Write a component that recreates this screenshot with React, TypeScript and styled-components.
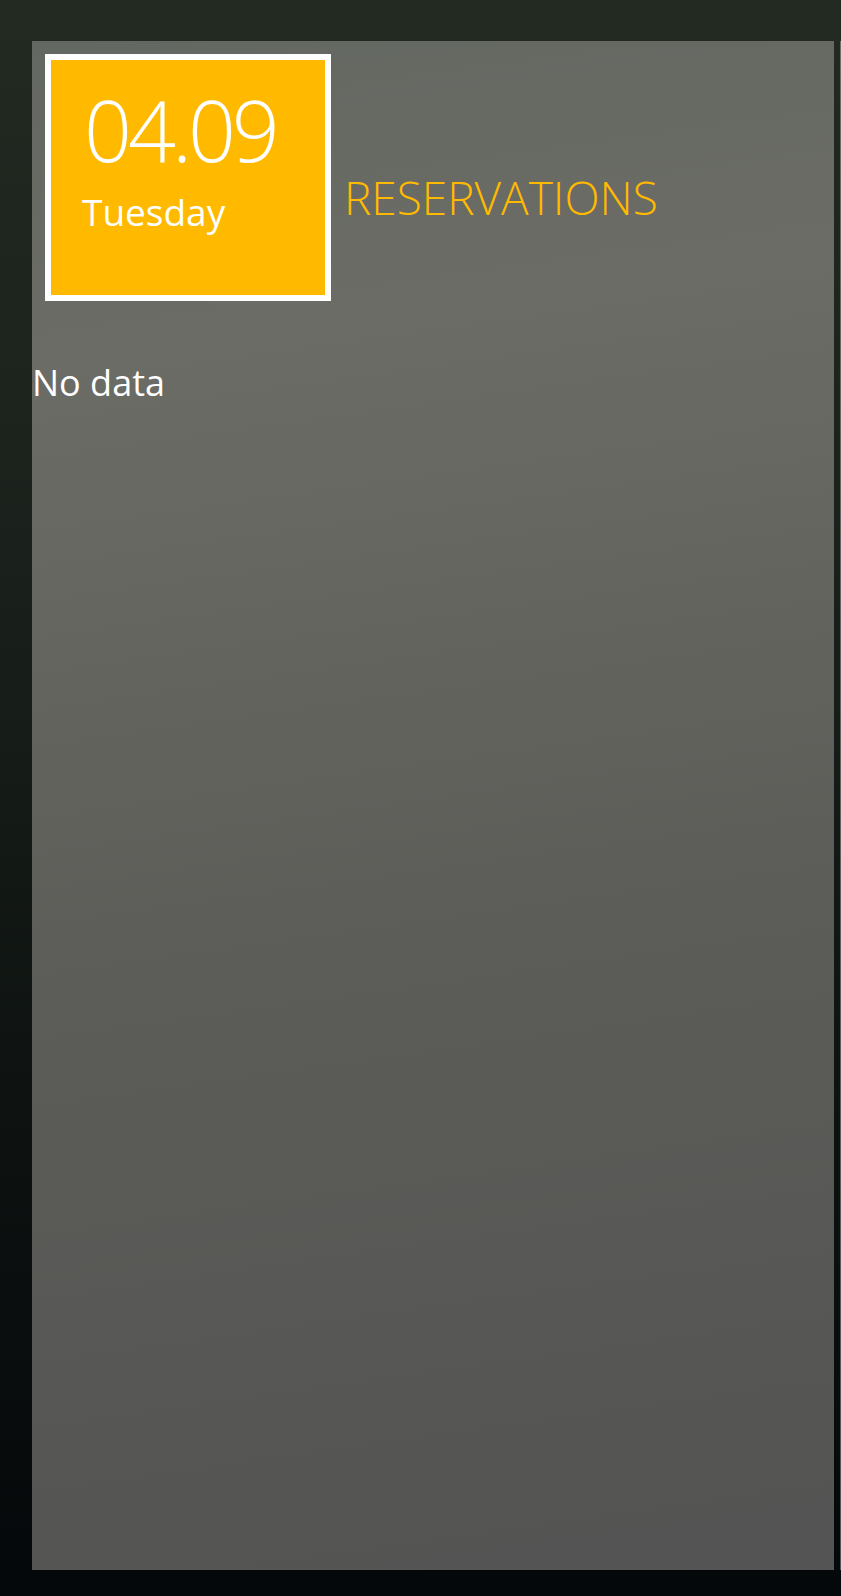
import styled, { createGlobalStyle } from 'styled-components';

const Global = createGlobalStyle`
  html, body {
    margin: 0;
    padding: 0;
    height: 1596px;
    overflow: hidden;
  }
  body {
    background: linear-gradient(180deg, #232a22 0%, #1a201b 35%, #0f1412 65%, #05080a 100%);
    font-family: 'Open Sans', 'Noto Sans', sans-serif;
    color: #fff;
  }
`;

const Stage = styled.div`
  display: flex;
  gap: 6px;
  padding: 41px 0 0 32px;
  height: 1529px;
`;

const Panel = styled.section`
  flex: 0 0 802px;
  height: 1529px;
  background: linear-gradient(172deg, #646862 0%, #6b6c65 20%, #5d5e59 55%, #535453 100%);
  display: flex;
  flex-direction: column;
`;

const NextPanel = styled.section`
  flex: 0 0 400px;
  height: 1529px;
  background: linear-gradient(180deg, #6e6f68 0%, #555553 100%);
`;

const Header = styled.header`
  display: flex;
  align-items: flex-start;
  gap: 13px;
  padding: 13px 0 0 13px;
`;

const DateTile = styled.div`
  box-sizing: border-box;
  flex: 0 0 286px;
  height: 247px;
  border: 6px solid #ffffff;
  background: #ffba00;
  padding: 28px 0 0 31px;
  display: flex;
  flex-direction: column;
`;

const DateNumber = styled.div`
  margin-left: 2px;
  font-size: 84px;
  font-weight: 300;
  line-height: 1;
  letter-spacing: -4px;
  color: #fff;
`;

const DayName = styled.div`
  margin-top: 21px;
  font-size: 37px;
  font-weight: 400;
  line-height: 1;
  color: #fff;
`;

const Title = styled.h1`
  margin: 120px 0 0;
  font-size: 46px;
  font-weight: 300;
  line-height: 1;
  color: #ffba00;
`;

const Empty = styled.p`
  margin: 64px 0 0 0;
  font-size: 36px;
  font-weight: 400;
  line-height: 1;
  color: #fff;
`;

export default function App() {
  return (
    <>
      <Global />
      <Stage>
        <Panel>
          <Header>
            <DateTile>
              <DateNumber>04.09</DateNumber>
              <DayName>Tuesday</DayName>
            </DateTile>
            <Title>RESERVATIONS</Title>
          </Header>
          <Empty>No data</Empty>
        </Panel>
        <NextPanel />
      </Stage>
    </>
  );
}
